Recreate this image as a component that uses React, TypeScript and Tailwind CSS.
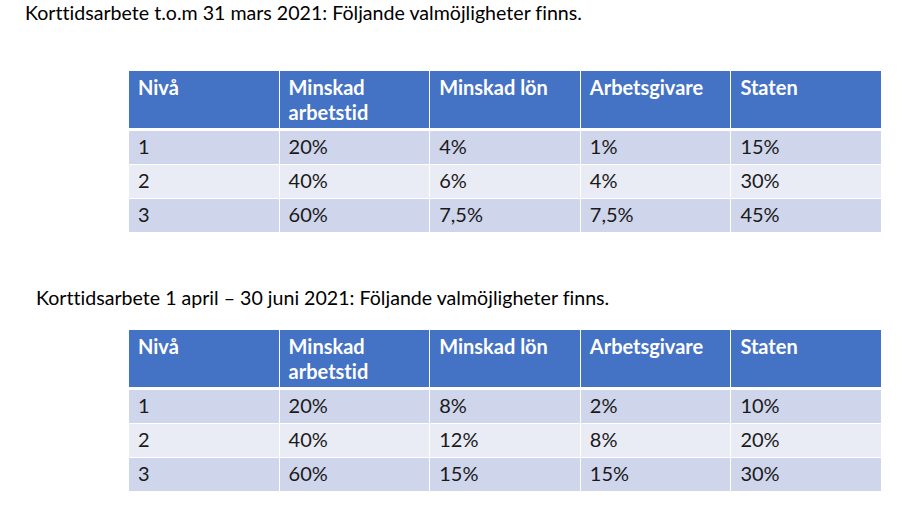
import React from 'react';

// Office "Medium Style 2 - Accent 1" look
const HEAD = ['Nivå', 'Minskad arbetstid', 'Minskad lön', 'Arbetsgivare', 'Staten'];

const TABLE_A = [
  ['1', '20%', '4%', '1%', '15%'],
  ['2', '40%', '6%', '4%', '30%'],
  ['3', '60%', '7,5%', '7,5%', '45%'],
];

const TABLE_B = [
  ['1', '20%', '8%', '2%', '10%'],
  ['2', '40%', '12%', '8%', '20%'],
  ['3', '60%', '15%', '15%', '30%'],
];

function InfoTable({ rows }: { rows: string[][] }) {
  return (
    <div className="ml-[129px] w-[752px] bg-white flex flex-col">
      <div className="grid grid-cols-5 gap-x-px h-[57px]">
        {HEAD.map((h) => (
          <div key={h} className="bg-[#4472c4] text-white font-bold pl-[9px] pr-2 pt-[4px] leading-[25px]">
            {h === 'Minskad arbetstid' ? (
              <>
                Minskad
                <br />
                arbetstid
              </>
            ) : (
              h
            )}
          </div>
        ))}
      </div>
      <div className="h-[3px]" />
      <div className="flex flex-col gap-y-px">
        {rows.map((r, i) => (
          <div key={i} className="grid grid-cols-5 gap-x-px h-[33px]">
            {r.map((c, j) => (
              <div
                key={j}
                className={`flex items-center pl-[9px] pb-[3px] text-[#1a1a1a] ${i === 1 ? 'bg-[#e9ebf5]' : 'bg-[#cfd5ea]'}`}
              >
                {c}
              </div>
            ))}
          </div>
        ))}
      </div>
    </div>
  );
}

export default function App() {
  return (
    <div className="w-[909px] h-[513px] bg-white text-[20px] text-black font-['Lato',_'Liberation_Sans',_sans-serif] [font-variant-ligatures:none] overflow-hidden">
      <p className="pl-[25px] pt-[1px] text-[19.6px] leading-[24px] h-[71px]">
        Korttidsarbete t.o.m 31 mars 2021: Följande valmöjligheter finns.
      </p>
      <InfoTable rows={TABLE_A} />
      <p className="pl-[36px] pt-[54px] text-[19.6px] leading-[24px] h-[98px]">
        Korttidsarbete 1 april – 30 juni 2021: Följande valmöjligheter finns.
      </p>
      <InfoTable rows={TABLE_B} />
    </div>
  );
}
